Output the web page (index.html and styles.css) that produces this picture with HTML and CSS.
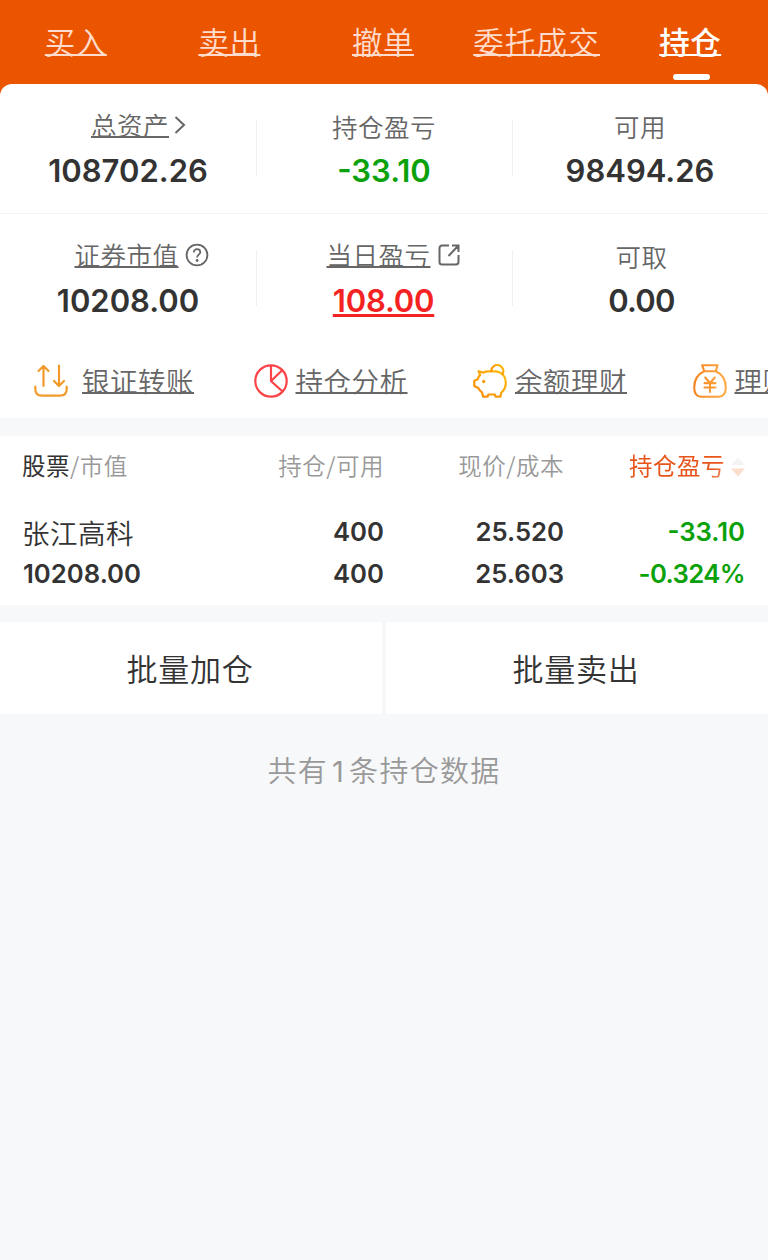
FILE: index.html
```html
<!DOCTYPE html>
<html lang="zh-CN">
<head>
<meta charset="utf-8">
<title>持仓</title>
<link rel="stylesheet" href="styles.css">
</head>
<body>
<header class="top">
  <nav class="tabs">
    <a class="tab"><span>买入</span></a>
    <a class="tab"><span>卖出</span></a>
    <a class="tab"><span>撤单</span></a>
    <a class="tab wide"><span>委托成交</span></a>
    <a class="tab active"><span>持仓</span></a>
  </nav>
</header>
<section class="card">
  <div class="stats">
    <div class="stat">
      <div class="label link total"><u>总资产</u><svg class="chev" viewBox="0 0 12 20"><path d="M1.5 2 10 10 1.5 18"/></svg></div>
      <div class="value">108702.26</div>
    </div>
    <div class="stat">
      <div class="label">持仓盈亏</div>
      <div class="value green">-33.10</div>
    </div>
    <div class="stat">
      <div class="label">可用</div>
      <div class="value">98494.26</div>
    </div>
  </div>
  <div class="stats second">
    <div class="stat">
      <div class="label link market"><u>证券市值</u><svg class="help" viewBox="0 0 24 24"><circle cx="12" cy="12" r="10.4"/><path d="M8.8 9.4C8.8 7.4 10.1 6.2 12 6.2s3.3 1.2 3.3 3c0 2.4-3.2 2.6-3.2 5.2"/><circle class="dot" cx="12.1" cy="17.5" r="1.4"/></svg></div>
      <div class="value">10208.00</div>
    </div>
    <div class="stat">
      <div class="label link daily"><u>当日盈亏</u><svg class="share" viewBox="0 0 22 22"><path d="M11 1.500H4A2.500 2.500 0 0 0 1.500 4v14A2.500 2.500 0 0 0 4 20.500h14a2.500 2.500 0 0 0 2.500-2.500v-7M14 1.500h6.500V8M20 2 10.500 12"/></svg></div>
      <div class="value red">108.00</div>
    </div>
    <div class="stat">
      <div class="label shift">可取</div>
      <div class="value zero">0.00</div>
    </div>
  </div>
  <div class="actions">
    <a class="action first">
      <svg viewBox="0 0 34 34"><g fill="none" stroke="#f29a2b" stroke-width="2.200" stroke-linecap="round" stroke-linejoin="round"><path d="M9.500 22V2M4.500 7l5-5 5 5M25 1.500v20M20 17l5 5 5-5"/><path d="M1.300 22.500v2.500q0 6.700 6.700 6.700h18q6.700 0 6.700-6.700v-2.500"/></g></svg>
      <u>银证转账</u>
    </a>
    <a class="action">
      <svg viewBox="0 0 34 34"><g fill="none" stroke="#fc4347" stroke-width="2.200"><circle cx="17" cy="17" r="15.700"/><path d="M17 1.500V17l11.500 10.500M17 17 28.500 6"/></g></svg>
      <u>持仓分析</u>
    </a>
    <a class="action">
      <svg viewBox="0 0 34 34"><defs><linearGradient id="pig" x1="0" y1="1" x2="1" y2="0"><stop offset="0" stop-color="#f88707"/><stop offset="1" stop-color="#ffbd08"/></linearGradient></defs><g fill="none" stroke="url(#pig)" stroke-width="2.200" stroke-linejoin="round" stroke-linecap="round"><path d="M5.600 7.200 10.500 8.600Q12.500 7.200 16 7.400H23C29.500 8.300 32.800 13 32.800 18.800C32.800 23 31 26.500 28.300 28.600L27.400 32.700H22.600L21.800 30.500H15.400L14.600 32.700H10.200L9 28.400Q6.700 26.800 5.300 24L1.300 22V16.800L4.700 15.300Q5.500 12.500 7.100 10.900Z"/><path d="M18.300 6.800A6 6 0 1 1 29.300 10.300"/></g><circle cx="10.700" cy="17.500" r="1.700" fill="#f99b08"/></svg>
      <u>余额理财</u>
    </a>
    <a class="action">
      <svg viewBox="0 0 34 34"><defs><linearGradient id="bag" gradientUnits="userSpaceOnUse" x1="0" y1="0" x2="34" y2="0"><stop offset="0" stop-color="#f5821f"/><stop offset="1" stop-color="#ffae48"/></linearGradient></defs><g fill="none" stroke="url(#bag)" stroke-width="2.100" stroke-linejoin="round" stroke-linecap="round"><path d="M9.200 1.300H24.600L22.700 7.200H11.200ZM11.200 7.200C5 10 1.200 16 1.200 23.500Q1.200 32.700 8.500 32.700H25.500Q32.800 32.700 32.800 23.500C32.800 16 29 10 22.700 7.200"/><path d="M12.200 13.500 17 19l4.800-5.500M11.500 19.100h11M11.500 23.500h11M17 19v9"/></g></svg>
      <u>理财</u>
    </a>
  </div>
</section>
<section class="table">
  <div class="row head">
    <div><b>股票</b>/市值</div>
    <div>持仓/可用</div>
    <div>现价/成本</div>
    <div class="sort"><span class="fade">持仓盈亏</span><svg viewBox="0 0 14 20"><path d="M7 .5 14 8H0Z" fill="#f3f3f3"/><path d="M0 11.500h14L7 19.500Z" fill="#fcdccd"/></svg></div>
  </div>
  <div class="row body">
    <div class="name">张江高科</div>
    <div>400</div>
    <div>25.520</div>
    <div class="green">-33.10</div>
  </div>
  <div class="row body">
    <div class="worth">10208.00</div>
    <div>400</div>
    <div>25.603</div>
    <div class="green percent">-0.324%</div>
  </div>
</section>
<section class="batch">
  <button>批量加仓</button>
  <button>批量卖出</button>
</section>
<footer class="count">共有<span class="num">1</span>条持仓数据</footer>
</body>
</html>
```
FILE: styles.css
```css
* { box-sizing: border-box; }
body {
  margin: 0;
  width: 768px;
  height: 1260px;
  overflow: hidden;
  background: #f7f8fa;
  color: #333;
  font-family: "Noto Sans CJK SC", sans-serif;
  font-weight: 350;
}
u, .tab span, .value.red {
  text-decoration-line: underline;
  text-decoration-thickness: 2px;
  text-decoration-skip-ink: none;
  text-underline-offset: 1px;
}
.top { height: 96px; background: #eb5500; }
.tabs { display: flex; height: 84px; }
.tab {
  flex: 1;
  display: flex;
  flex-direction: column;
  align-items: center;
  font-size: 30.500px;
  letter-spacing: .5px;
  line-height: 40px;
  padding: 21px 2px 0 0;
  color: #ffdccb;
  white-space: nowrap;
}
.tab span { text-underline-offset: 0; }
.wide { letter-spacing: 1.200px; }
.active { color: #fff; font-weight: 500; }
.active::after {
  content: "";
  width: 37px;
  height: 6px;
  margin: 13px 0 0 2px;
  border-radius: 3px;
  background: #fff;
}
.card {
  height: 334px;
  margin-top: -12px;
  overflow: hidden;
  border-radius: 12px 12px 0 0;
  background: #fff;
}
.stats {
  display: grid;
  grid-template-columns: repeat(3, 256px);
  height: 130px;
  padding-top: 26px;
  border-bottom: 1px solid #f3f3f4;
}
.stats.second { border-bottom: 0; }
.stat {
  display: flex;
  flex-direction: column;
  align-items: center;
  height: 90px;
}
.stat + .stat { background: linear-gradient(#f0f0f1, #f0f0f1) left 10px / 1px 56px no-repeat; }
.label {
  display: flex;
  align-items: center;
  height: 32px;
  line-height: 32px;
  font-size: 25.500px;
  letter-spacing: .5px;
  color: #666;
}
.label svg { fill: none; stroke: #666; }
.label.link { height: 28px; line-height: 28px; margin-bottom: 4px; }
.chev { width: 12px; height: 20px; margin: 2px 0 0 5px; stroke-width: 2; }
.total { padding-left: 21px; }
.market { padding-left: 27px; }
.help { width: 24px; height: 24px; margin: 2px 0 0 6px; stroke-width: 1.800; }
.help .dot { fill: #666; stroke: none; }
.daily { padding-left: 18px; }
.share { width: 22px; height: 22px; margin: 2px 0 0 7px; stroke-width: 2; }
.value {
  margin-top: 9px;
  height: 40px;
  line-height: 40px;
  font-family: Inter, sans-serif;
  font-size: 31px;
  font-weight: 600;
}
.shift { padding-left: 3px; }
.zero { padding-left: 3px; letter-spacing: -.700px; }
.green { color: #0ba10b; }
.value.red {
  color: #f42222;
  letter-spacing: -.200px;
  padding-right: 1px;
  text-decoration-thickness: 3px;
  text-underline-offset: 2px;
}
.actions {
  display: flex;
  width: 900px;
  height: 74px;
  padding-left: 34px;
}
.action {
  display: flex;
  flex: 0 0 219.500px;
  align-items: center;
  gap: 8px;
  height: 73px;
  font-size: 27.500px;
  letter-spacing: .5px;
  line-height: 38px;
  color: #666;
}
.action u { height: 40px; text-underline-offset: 0; }
.action.first { gap: 14px; }
.action svg { width: 34px; height: 34px; }
.table { margin-top: 18px; height: 169px; padding-top: 10px; background: #fff; }
.row {
  display: grid;
  grid-template-columns: 180px 181px 180px 181px;
  padding-left: 23px;
  height: 42px;
  line-height: 42px;
  text-align: right;
}
.row > :first-child { text-align: left; margin-left: -1px; }
.row > .worth { margin-left: 0; }
.head { height: 65px; line-height: 39px; font-size: 23.500px; letter-spacing: .5px; color: #999; }
.head b { font-weight: 400; color: #333; }
.sort { display: flex; justify-content: flex-end; color: #e8551a; font-weight: 400; }
.sort svg { width: 14px; height: 20px; margin: 11px 0 0 6px; }
.fade { -webkit-mask-image: linear-gradient(125deg, #000 72%, rgba(0,0,0,.15) 92%); mask-image: linear-gradient(125deg, #000 72%, rgba(0,0,0,.15) 92%); }
.body { font-family: Inter, sans-serif; font-size: 25.700px; font-weight: 600; }
.percent { letter-spacing: -.600px; }
.name { font-family: "Noto Sans CJK SC", sans-serif; font-size: 27.500px; font-weight: 350; letter-spacing: .5px; }
.batch { display: flex; gap: 4px; margin-top: 17px; }
.batch button {
  flex: 1;
  height: 92px;
  padding: 0 2px 0 0;
  border: 0;
  background: #fff;
  font: 350 31px/40px "Noto Sans CJK SC", sans-serif;
  letter-spacing: .700px;
  color: #333;
}
.count {
  padding-top: 35px;
  text-align: center;
  font-size: 29px;
  line-height: 40px;
  letter-spacing: 1.300px;
  color: #999;
}
.num { font-family: Inter, sans-serif; font-weight: 400; line-height: 1; padding: 0 4px; }
```
